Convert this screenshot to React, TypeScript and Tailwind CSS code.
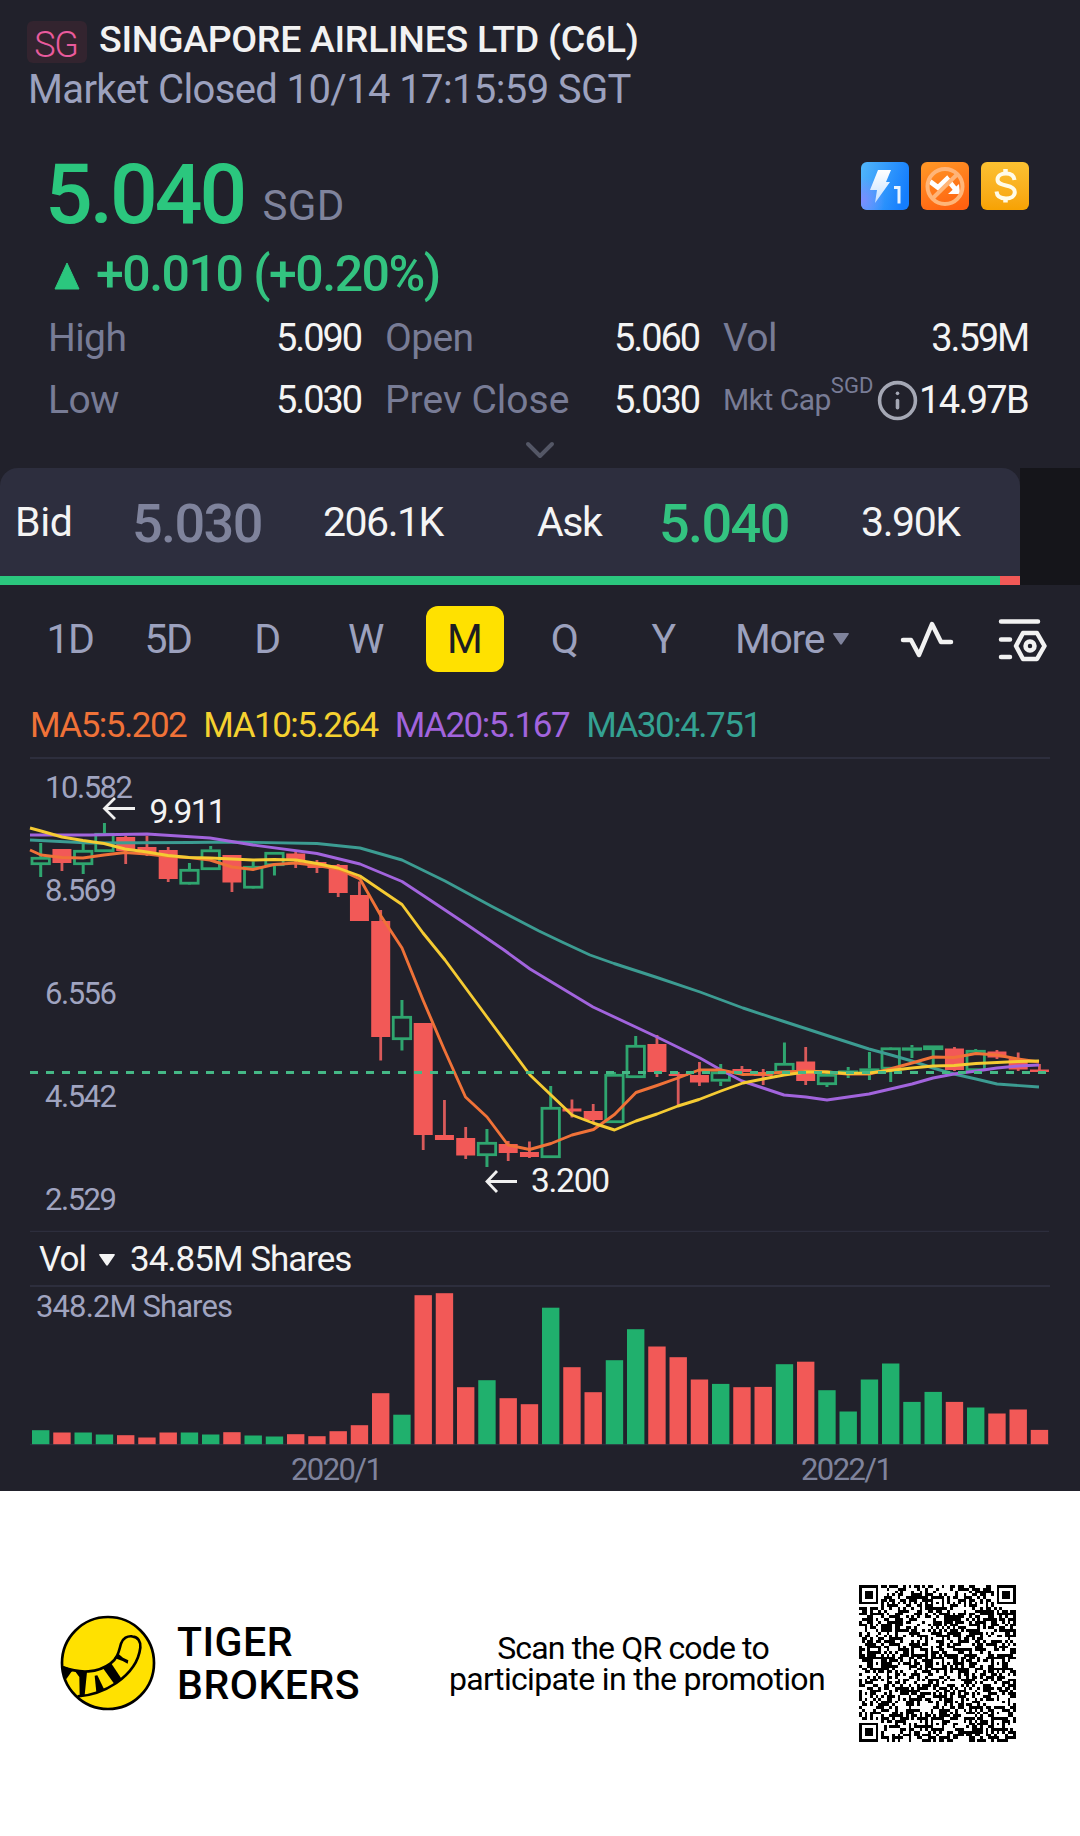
import { Info } from "lucide-react";

type Candle = {
  up: boolean;
  high: number;
  top: number;
  bottom: number;
  low: number;
  vol: number;
};

const c = (
  side: "g" | "r",
  high: number,
  top: number,
  bottom: number,
  low: number,
  vol: number
): Candle => ({ up: side === "g", high, top, bottom, low, vol });

// y values are in chart pixels, vol is the bar height
const candles: Candle[] = [
  c("g", 843, 857, 865, 877, 14),
  c("r", 849, 849, 863, 871, 11.7),
  c("g", 843, 850, 865, 874, 11.7),
  c("g", 823, 833, 852, 852, 9.7),
  c("r", 836, 837, 851, 864, 9),
  c("r", 836, 847, 852, 856, 6.7),
  c("r", 847, 850, 879, 882, 11.7),
  c("g", 863, 869, 884.5, 884, 11.7),
  c("g", 846, 849.5, 870, 870, 9.7),
  c("r", 855, 855, 882.5, 892, 12),
  c("g", 861.5, 866, 888.5, 888, 8.7),
  c("g", 852, 852, 866, 875.5, 7.7),
  c("r", 852, 853.5, 861, 868, 10),
  c("r", 860, 862, 868, 873, 8),
  c("r", 864, 865, 893, 897, 13),
  c("r", 881.5, 895, 921, 921, 19),
  c("r", 910, 921, 1037, 1060.5, 51),
  c("g", 1000, 1016, 1040, 1050.5, 29.5),
  c("r", 1023, 1023, 1135, 1150, 149),
  c("r", 1100, 1135, 1140, 1140, 151),
  c("r", 1127, 1138, 1155.5, 1159, 57),
  c("g", 1129, 1142, 1156, 1167, 64),
  c("r", 1141, 1144, 1153, 1161, 46),
  c("r", 1141.5, 1152, 1157, 1158, 40),
  c("g", 1086, 1107, 1158, 1158, 136.5),
  c("r", 1099.5, 1108.5, 1111.5, 1117.5, 77),
  c("r", 1104, 1111, 1120, 1122, 52),
  c("g", 1072, 1074, 1123, 1123, 84),
  c("g", 1036, 1045, 1078, 1078, 115),
  c("r", 1035, 1044, 1072, 1077, 97.7),
  c("r", 1072, 1074, 1076, 1106, 87),
  c("r", 1062, 1075, 1082.5, 1086, 64.7),
  c("g", 1064, 1071.5, 1081.5, 1086, 60.3),
  c("r", 1066, 1069, 1072, 1075, 57),
  c("r", 1069, 1072, 1076, 1085, 57.3),
  c("g", 1042.5, 1063, 1073, 1073, 80),
  c("r", 1047, 1061.5, 1081, 1085, 82.5),
  c("g", 1072, 1074, 1085, 1087, 54),
  c("g", 1067, 1070.5, 1074, 1078, 32.7),
  c("g", 1052, 1068.5, 1072, 1080, 64.7),
  c("g", 1047, 1047.5, 1069.5, 1082, 80.7),
  c("g", 1045, 1047.5, 1050, 1058, 42.3),
  c("g", 1045.5, 1045.5, 1050, 1066, 52.3),
  c("r", 1047, 1048.5, 1070, 1071, 42.3),
  c("g", 1049, 1050, 1071, 1071, 36.7),
  c("r", 1050, 1051.5, 1057.5, 1059, 30.7),
  c("r", 1052.5, 1059, 1069.5, 1071, 34.7),
  c("r", 1064, 1069.5, 1072, 1072, 14.3),
];

const maLines = [
  {
    color: "#3c9c92",
    points:
      "30,840 90,843 190,842.5 232,842 317,843.5 360,848 402,860 445,881 492,906.5 539,931 562,942 590,955 614,963.5 657,977.5 700,992 743,1008 784,1021.5 827,1035.5 869,1049 891,1055 912,1061 933,1068 954,1074 976,1079 997,1084 1039,1087",
  },
  {
    color: "#a264dd",
    points:
      "30,835 90,835 147,834 210,838 253,845 317,853.5 360,864 402,881.5 424,896 466,924 504,950 530,969 593,1007 657,1037 700,1058 721,1070 742,1081 763,1088 784,1095 806,1097 827,1100 848,1097 869,1094 912,1084 933,1078 954,1074 976,1071 997,1068 1018,1066 1039,1065",
  },
  {
    color: "#f07238",
    points:
      "30,850 41,855 62,857.5 83,858 104,855 125,852.5 147,854 168,856.5 189,857.5 210,860 232,867 253,869.5 274,864.5 296,863 317,865.5 338,869 360,879 381,916 402,948 423,1000 444,1049 465.5,1097 487,1117 508,1145 529.5,1149.5 551,1143.5 572,1135 593.5,1129.5 614.5,1114.5 636,1092.5 657,1085.5 678,1078 699,1070 721,1070 743,1074.5 763,1074 784,1072 806,1071 827,1072 847,1074 869,1074 890,1069 912,1063 933,1057 954,1057.5 976,1053.5 997,1055 1018,1059 1039,1062",
  },
  {
    color: "#f5cb33",
    points:
      "30,828 41,831 62,837 83,840.5 104,843.5 125,849 147,852 168,855.5 189,857.5 210,858 232,859 253,860 274,859.5 296,860 317,863.5 338,868 360,876 402,904.5 423,933 445,960 487,1017 530,1075 572,1115 593,1123 614.5,1130 636,1121 657,1114 678,1106 699,1099.5 721,1091 743,1083 763,1079 784,1075 806,1072 827,1072 847,1073.5 869,1073 890,1070.5 912,1068 933,1066 954,1065.5 976,1063.5 997,1062.5 1018,1061.5 1039,1061",
  },
];

const axis = [
  { label: "10.582", x: 45, y: 798, w: 88 },
  { label: "8.569", x: 45, y: 901, w: 72 },
  { label: "6.556", x: 45, y: 1004, w: 72 },
  { label: "4.542", x: 45, y: 1107, w: 72 },
  { label: "2.529", x: 45, y: 1210, w: 72 },
];

const centre = (i: number) => 40.7 + i * 21.25;

const PriceChart = () => (
  <svg
    className="block h-[473px] w-[1080px]"
    viewBox="0 759 1080 473"
    fontFamily="Roboto, sans-serif"
  >
    <path d="M30 1231.5H1049" stroke="#2d2e3d" strokeWidth="1.5" />
    {axis.map((a) => (
      <text key={a.label} x={a.x} y={a.y} fontSize="31" textLength={a.w} fill="#a0a4c0">
        {a.label}
      </text>
    ))}
    {candles.map((k, i) => {
      const x = centre(i);
      const height = k.bottom - k.top;
      return k.up ? (
        <g key={i} stroke="#2fa56f" strokeWidth="2.8" fill="none">
          <path d={`M${x} ${k.high}V${k.top}M${x} ${k.bottom}V${k.low}`} strokeWidth="3" />
          <rect x={x - 8.7} y={k.top + 1.3} width="17.4" height={Math.max(height - 2.6, 0.5)} />
        </g>
      ) : (
        <g key={i}>
          <path d={`M${x} ${k.high}V${k.low}`} stroke="#d95a5a" strokeWidth="2.8" />
          <rect x={x - 9.5} y={k.top} width="19" height={height} fill="#f25957" />
        </g>
      );
    })}
    {maLines.map((m) => (
      <polyline
        key={m.color}
        points={m.points}
        stroke={m.color}
        strokeWidth="2.9"
        strokeLinejoin="round"
        fill="none"
      />
    ))}
    <path d="M30 1072.5H1048" stroke="#45b886" strokeWidth="3" strokeDasharray="8 8" />
    <g stroke="#f0f0f0" strokeWidth="2.8" fill="none">
      <path d="M135 808.5H104M115 798L104.5 808.5L115 819" />
      <path d="M517 1181.5H487M497 1171L487 1181.5L497 1192" />
    </g>
    <text x="149.5" y="823" fontSize="33.5" textLength="77" fill="#f4f4f4">
      9.911
    </text>
    <text x="531" y="1192" fontSize="33.5" textLength="79" fill="#f4f4f4">
      3.200
    </text>
  </svg>
);

const VolumeChart = () => (
  <svg
    className="block h-[204px] w-[1080px]"
    viewBox="0 1287 1080 204"
    fontFamily="Roboto, sans-serif"
  >
    <path d="M30 1444.5H1049" stroke="#2d2e3d" strokeWidth="1.5" />
    <text x="36" y="1317" fontSize="31" textLength="197" fill="#a0a4c0">
      348.2M Shares
    </text>
    {candles.map((k, i) => (
      <rect
        key={i}
        x={centre(i) - 8.7}
        y={1444.2 - k.vol}
        width="17.4"
        height={k.vol}
        fill={k.up ? "#20b06d" : "#f25957"}
      />
    ))}
    <text x="291" y="1480" fontSize="31" textLength="92" fill="#7f839c">
      2020/1
    </text>
    <text x="801" y="1480" fontSize="31" textLength="92" fill="#7f839c">
      2022/1
    </text>
  </svg>
);

const QR_SIZE = 57;

// finder and alignment marks are fixed, the data area is a seeded pattern
const buildQr = () => {
  let seed = 20221014;
  const random = () => {
    seed = (seed * 1103515245 + 12345) % 2147483648;
    return seed / 2147483648;
  };
  const cells = Array.from({ length: QR_SIZE }, () =>
    Array.from({ length: QR_SIZE }, () => random() > 0.5)
  );
  const set = (x: number, y: number, on: boolean) => {
    if (x >= 0 && y >= 0 && x < QR_SIZE && y < QR_SIZE) cells[y][x] = on;
  };
  for (let i = 8; i < QR_SIZE - 8; i++) {
    set(i, 6, i % 2 === 0);
    set(6, i, i % 2 === 0);
  }
  const ring = (cx: number, cy: number, reach: number, light: number[]) => {
    for (let dy = -reach; dy <= reach; dy++)
      for (let dx = -reach; dx <= reach; dx++)
        set(cx + dx, cy + dy, !light.includes(Math.max(Math.abs(dx), Math.abs(dy))));
  };
  for (const [x, y] of [[28, 6], [6, 28], [28, 28], [50, 28], [28, 50], [50, 50]])
    ring(x, y, 2, [1]);
  for (const [x, y] of [[3, 3], [53, 3], [3, 53]]) ring(x, y, 4, [2, 4]);
  let d = "";
  cells.forEach((row, y) =>
    row.forEach((on, x) => {
      if (on) d += `M${x} ${y}h1v1h-1z`;
    })
  );
  return d;
};

const qrPath = buildQr();

const Logo = () => (
  <svg className="size-[96px]" viewBox="59 76 288 288">
    <circle cx="203" cy="220" r="138" fill="#ffe100" stroke="#000" strokeWidth="8" />
    <path
      d="M68 233C120 252 172 250 210 222C234 204 236 182 242 162C247 145 262 138 276 140C293 142 302 156 300 174C295 216 268 252 228 280C192 304 156 318 112 320"
      fill="none"
      stroke="#000"
      strokeWidth="8"
    />
    <path d="M66 228L102 242L93 247L78 268L72 262Z" />
    <path d="M103 243L140 247L133 317L118 318L117 262Z" />
    <path d="M163 258L171 257L192 300L168 307Z" />
    <path d="M188 236L212 220L244 268L222 283Z" />
    <path d="M222 205L234 192L248 204L264 212L262 222L247 214Z" />
  </svg>
);

const LightningBadge = () => (
  <svg className="size-12" viewBox="0 0 48 48">
    <defs>
      <linearGradient id="blue" x1="0" y1="0.2" x2="1" y2="0.5">
        <stop offset="0" stopColor="#4fb4fb" />
        <stop offset="1" stopColor="#147dfd" />
      </linearGradient>
      <radialGradient id="violet" cx="0" cy="0.8" r="0.5">
        <stop offset="0" stopColor="#7d8cff" />
        <stop offset="1" stopColor="#7d8cff" stopOpacity="0" />
      </radialGradient>
      <linearGradient id="bolt" x1="0" y1="0" x2="0" y2="1">
        <stop offset="0" stopColor="#fff" />
        <stop offset="1" stopColor="#c4e0ff" />
      </linearGradient>
    </defs>
    <rect width="48" height="48" rx="6" fill="url(#blue)" />
    <rect width="48" height="48" rx="6" fill="url(#violet)" />
    <path d="M17 8H30L25 20H29L14 41L16 28H9Z" fill="url(#bolt)" />
    <path d="M33 25.5H38V41.5" stroke="#e8f3ff" strokeWidth="3" fill="none" />
  </svg>
);

const NoShortBadge = () => (
  <svg className="size-12" viewBox="0 0 48 48">
    <defs>
      <linearGradient id="orange" x1="0.3" y1="0" x2="0.7" y2="1">
        <stop offset="0" stopColor="#ff9425" />
        <stop offset="1" stopColor="#ff6110" />
      </linearGradient>
    </defs>
    <rect width="48" height="48" rx="6" fill="url(#orange)" />
    <path d="M9 19.5L17 25.5L26 17L35 28" stroke="#fff" strokeWidth="5" fill="none" />
    <path d="M27 32L38 22L39 32Z" fill="#fff" />
    <circle cx="24" cy="24.5" r="17.5" stroke="#ffb578" strokeWidth="4" fill="none" />
    <path d="M12 36L36 12.5" stroke="#ffb578" strokeWidth="4" />
  </svg>
);

const DollarBadge = () => (
  <div className="flex size-12 items-center justify-center rounded-md bg-linear-to-b from-[#fcc131] to-[#f7a202]">
    <svg className="size-12" viewBox="0 0 48 48" fill="none" stroke="#fffbe8">
      <path
        d="M33.5 18C33 13.5 29.5 11.5 25 11.5C20 11.5 16.5 14 16.5 17.5C16.5 21.5 20 22.5 25 23.5C30 24.5 33.8 26 33.8 30C33.8 34 30 36.5 25 36.5C20 36.5 16 34.5 15.5 29.5"
        strokeWidth="4"
      />
      <path d="M24.5 7V12M24.5 36V40.5" strokeWidth="4.5" />
    </svg>
  </div>
);

const Stat = ({
  label,
  value,
  spacing = "tracking-[-0.6px]",
}: {
  label: string;
  value: string;
  spacing?: string;
}) => (
  <div className="flex justify-between">
    <span className={`text-[39px] text-[#787c96] ${spacing}`}>{label}</span>
    <span className="pr-px text-[38px] tracking-[-2.1px] text-[#f4f4f4]">{value}</span>
  </div>
);

const tabs = [
  { name: "1D", box: "w-[100px]" },
  { name: "5D", box: "w-[96px]" },
  { name: "D", box: "w-[102px]" },
  { name: "W", box: "w-[95px]" },
  { name: "M", box: "w-[104px]" },
  { name: "Q", box: "w-[94px]" },
  { name: "Y", box: "w-[104px]" },
];

const Quote = () => (
  <section className="h-[468px]">
    <div className="flex items-start pt-[21px] pl-[27px]">
      <div className="flex h-[42px] w-[60px] items-center justify-center rounded-md bg-[#33242f] pt-[5px] pr-[2px] text-[36px] font-light tracking-[-1.2px] text-[#ea5b9d]">
        SG
      </div>
      <h1 className="ml-[12px] text-[37.5px] leading-9 font-medium tracking-[-0.32px] text-[#f2f2f2]">
        SINGAPORE AIRLINES LTD (C6L)
      </h1>
    </div>
    <p className="mt-[5px] pl-7 text-[40px] leading-[44px] tracking-[-0.62px] text-[#9ca1be]">
      Market Closed 10/14 17:15:59 SGT
    </p>

    <div className="mt-[41px] flex h-[84px] items-start pr-[51px] pl-[45px]">
      <span className="w-[203px] text-[84px] leading-[84px] font-medium tracking-[-3px] text-[#2bc77e]">
        5.040
      </span>
      <span className="mt-8 ml-[14.5px] text-[42px] leading-[42px] tracking-[0.3px] text-[#7f839c]">
        SGD
      </span>
      <div className="mt-[9px] ml-auto flex gap-3">
        <LightningBadge />
        <NoShortBadge />
        <DollarBadge />
      </div>
    </div>

    <div className="mt-3 flex h-[50px] items-center pl-[54px]">
      <svg className="mt-1 h-7 w-[26px]" viewBox="0 0 26 28">
        <path d="M13 1L25 27H1Z" fill="#2bc77e" stroke="#2bc77e" strokeLinejoin="round" />
      </svg>
      <span className="ml-4 text-[50px] leading-[50px] font-medium tracking-[-1.5px] text-[#33c380]">
        +0.010 (+0.20%)
      </span>
    </div>

    <div className="mt-[19px] grid grid-cols-[314px_315px_306px] gap-x-[23px] gap-y-[22px] pl-[48px] leading-10">
      <Stat label="High" value="5.090" />
      <Stat label="Open" value="5.060" />
      <Stat label="Vol" value="3.59M" />
      <Stat label="Low" value="5.030" />
      <Stat label="Prev Close" value="5.030" spacing="tracking-[0px]" />
      <div className="flex h-10 items-center whitespace-nowrap">
        <span className="text-[30px] tracking-[-0.5px] text-[#787c96]">Mkt Cap</span>
        <span className="mb-7 text-[22px] leading-none text-[#787c96]">SGD</span>
        <Info className="-mr-2 ml-[3px] size-[43px] shrink-0 text-[#a5a8b5]" strokeWidth={2} />
        <span className="ml-auto pr-px text-[38px] tracking-[-1.7px] text-[#f4f4f4]">14.97B</span>
      </div>
    </div>

    <svg className="mx-auto mt-[21px] h-5 w-8" viewBox="0 0 32 20" fill="none">
      <path
        d="M4 3L16 15L28 3"
        stroke="#545766"
        strokeWidth="4"
        strokeLinecap="round"
        strokeLinejoin="round"
      />
    </svg>
  </section>
);

const BidAsk = () => (
  <section className="h-[117px] bg-[#15151a]">
    <div className="h-full w-[1020px] bg-[#21212b]">
      <div className="flex h-full flex-col overflow-hidden rounded-t-[18px] bg-[#2d2e3e]">
        <div className="flex h-[108px] items-center pt-[2px] text-[41px] text-[#f4f4f4]">
          <span className="w-[117px] pl-[15px] tracking-[-0.4px]">Bid</span>
          <span className="w-[206px] pl-[15px] text-[54px] font-medium tracking-[-1.6px] text-[#7f839c]">
            5.030
          </span>
          <span className="w-[214px] tracking-[-1.5px]">206.1K</span>
          <span className="w-[122px] tracking-[-1.5px]">Ask</span>
          <span className="w-[202px] text-[54px] font-medium tracking-[-1.6px] text-[#33c380]">
            5.040
          </span>
          <span className="tracking-[-1.4px]">3.90K</span>
        </div>
        <div className="flex h-[9px]">
          <div className="w-[1000px] bg-[#2bc77e]" />
          <div className="flex-1 bg-[#f25957]" />
        </div>
      </div>
    </div>
  </section>
);

const Toolbar = () => (
  <nav className="flex h-[108px] items-center pl-[20px] text-[41px] text-[#9ca1be]">
    {tabs.map((tab) => (
      <div key={tab.name} className={`flex justify-center ${tab.box}`}>
        {tab.name === "M" ? (
          <span className="flex h-[66px] w-[78px] items-center justify-center rounded-xl bg-[#ffe100] pt-[2px] text-[#1d1d22]">
            M
          </span>
        ) : (
          <span className="pt-[2px] tracking-[-1.5px]">{tab.name}</span>
        )}
      </div>
    ))}
    <span className="ml-[20px] w-[88px] pt-[2px] tracking-[-1.3px]">More</span>
    <svg className="ml-[10px] h-3 w-4" viewBox="0 0 16 12">
      <path d="M1 0H15Q16.5 0 15.5 1.5L9 11Q8 12.5 7 11L0.5 1.5Q-0.5 0 1 0Z" fill="#7f839c" />
    </svg>
    <svg className="mt-[2px] ml-[51px] h-11 w-[54px]" viewBox="0 0 54 44" fill="none">
      <path
        d="M3 22H11L19 37L32 6L41 24H51"
        stroke="#f2f2f2"
        strokeWidth="4.5"
        strokeLinecap="round"
        strokeLinejoin="round"
      />
    </svg>
    <svg
      className="mt-px ml-[44px] h-[46px] w-[50px]"
      viewBox="0 0 50 46"
      fill="none"
      stroke="#f2f2f2"
      strokeWidth="4.5"
      strokeLinecap="round"
      strokeLinejoin="round"
    >
      <path d="M3 4.5H40M3 22.5H12M3 40H12" />
      <path d="M25 16H39L46.5 29L39 42H25L18 29Z" />
      <circle cx="32" cy="29" r="4.5" />
    </svg>
  </nav>
);

const Footer = () => (
  <footer className="flex h-[345px] items-start bg-white text-black">
    <div className="mt-[124px] ml-[60px]">
      <Logo />
    </div>
    <div className="mt-[130px] ml-[21px] w-[269px] text-[41px] leading-[43px] font-medium tracking-[0.5px]">
      <p>TIGER</p>
      <p>BROKERS</p>
    </div>
    <div className="mt-[142px] w-[382px] text-center text-[32px] leading-[31px] whitespace-nowrap">
      <p className="mr-2 tracking-[-0.85px]">Scan the QR code to</p>
      <p className="tracking-[-0.65px]">participate in the promotion</p>
    </div>
    <svg
      className="mt-[94px] ml-[31px] size-[157px]"
      viewBox="0 0 57 57"
      shapeRendering="crispEdges"
    >
      <path d={qrPath} />
    </svg>
  </footer>
);

const App = () => {
  return (
    <main className="h-[1836px] w-[1080px] overflow-hidden bg-[#21212b] font-[Roboto,sans-serif]">
      <Quote />
      <BidAsk />
      <Toolbar />
      <div className="mx-[30px] flex h-[66px] items-center gap-[17px] border-b-2 border-[#2d2e3d] pt-[2px] text-[35px] leading-[64px] tracking-[-1.5px]">
        <span className="text-[#f07238]">MA5:5.202</span>
        <span className="text-[#f5d130]">MA10:5.264</span>
        <span className="text-[#a264dd]">MA20:5.167</span>
        <span className="text-[#34a192]">MA30:4.751</span>
      </div>
      <PriceChart />
      <div className="mx-[30px] flex h-[55px] items-center border-b-2 border-[#2d2e3d] pt-[4px] pl-[9px] text-[35px] tracking-[-1px] text-[#f4f4f4]">
        <span>Vol</span>
        <svg className="mb-px ml-[13px] h-3 w-4" viewBox="0 0 16 12">
          <path d="M1 0H15Q16.5 0 15.5 1.5L9 11Q8 12.5 7 11L0.5 1.5Q-0.5 0 1 0Z" fill="#f4f4f4" />
        </svg>
        <span className="ml-[15px]">34.85M Shares</span>
      </div>
      <VolumeChart />
      <Footer />
    </main>
  );
};

export default App;
